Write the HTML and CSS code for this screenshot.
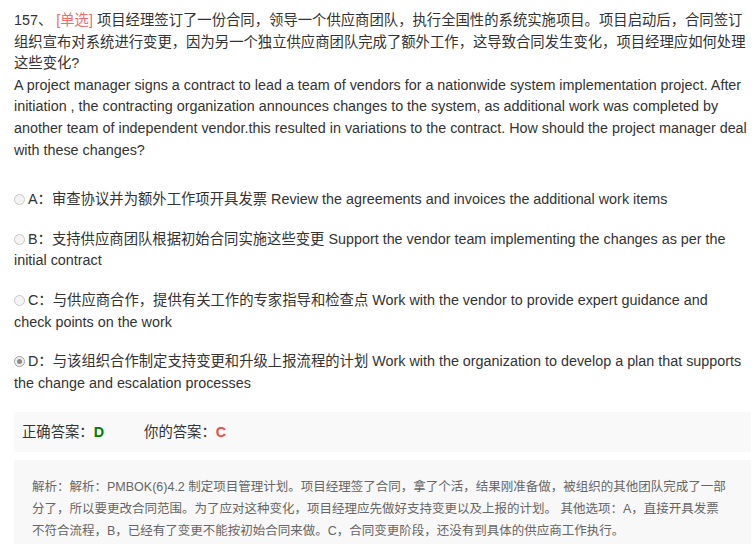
FILE: index.html
```html
<!DOCTYPE html>
<html lang="zh-CN">
<head>
<meta charset="utf-8">
<link rel="stylesheet" href="styles.css">
</head>
<body>
<div class="page">
  <div class="question">
    <div class="q-cn">157、 <span class="tag">[单选]</span> 项目经理签订了一份合同，领导一个供应商团队，执行全国性的系统实施项目。项目启动后，合同签订组织宣布对系统进行变更，因为另一个独立供应商团队完成了额外工作，这导致合同发生变化，项目经理应如何处理这些变化?</div>
    <div class="q-en">A project manager signs a contract to lead a team of vendors for a nationwide system implementation project. After initiation , the contracting organization announces changes to the system, as additional work was completed by another team of independent vendor.this resulted in variations to the contract. How should the project manager deal with these changes?</div>
  </div>
  <ul class="options">
    <li class="option"><span class="radio"></span>A：审查协议并为额外工作项开具发票 Review the agreements and invoices the additional work items</li>
    <li class="option"><span class="radio"></span>B：支持供应商团队根据初始合同实施这些变更 Support the vendor team implementing the changes as per the initial contract</li>
    <li class="option"><span class="radio"></span>C：与供应商合作，提供有关工作的专家指导和检查点 Work with the vendor to provide expert guidance and check points on the work</li>
    <li class="option"><span class="radio checked"></span>D：与该组织合作制定支持变更和升级上报流程的计划 Work with the organization to develop a plan that supports the change and escalation processes</li>
  </ul>
  <div class="answer">
    <span class="ans-item">正确答案：<b class="correct">D</b></span>
    <span class="ans-item">你的答案：<b class="wrong">C</b></span>
  </div>
  <div class="analysis">解析：解析：PMBOK(6)4.2 制定项目管理计划。项目经理签了合同，拿了个活，结果刚准备做，被组织的其他团队完成了一部分了，所以要更改合同范围。为了应对这种变化，项目经理应先做好支持变更以及上报的计划。 其他选项：A，直接开具发票不符合流程，B，已经有了变更不能按初始合同来做。C，合同变更阶段，还没有到具体的供应商工作执行。</div>
</div>
</body>
</html>
```

FILE: styles.css
```css
html, body {
  margin: 0;
  padding: 0;
  background: #ffffff;
}

.page {
  padding: 10px 6px 0 14px;
  font-family: "Liberation Sans", Arial, "Noto Sans CJK SC", sans-serif;
  font-size: 14.35px;
  color: #333333;
  line-height: 21.6px;
}

.tag {
  color: #f56c6c;
}

.options {
  list-style: none;
  margin: 28px 0 0 0;
  padding: 0;
}

.option {
  margin-bottom: 18px;
}

.radio {
  display: inline-block;
  box-sizing: border-box;
  width: 11px;
  height: 11px;
  border: 1px solid #c8c8c8;
  border-radius: 50%;
  background: #f4f4f4;
  margin-right: 3px;
  vertical-align: -1px;
  position: relative;
}

.radio.checked {
  border-color: #a0a0a0;
  background: #f0f0f0;
}

.radio.checked::after {
  content: "";
  position: absolute;
  left: 2px;
  top: 2px;
  width: 5px;
  height: 5px;
  border-radius: 50%;
  background: #8a8a8a;
}

.answer {
  margin: 18px -3px 0 0;
  background: #f9f9f9;
  height: 40px;
  display: flex;
  align-items: center;
  padding-left: 8px;
  gap: 40px;
}

.correct {
  color: #008000;
}

.wrong {
  color: #f04848;
}

.analysis {
  margin: 8px -3px 0 0;
  background: #f8f8f8;
  padding: 16px 22px 10px 18px;
  font-size: 12.5px;
  line-height: 22px;
  color: #666666;
}
```
